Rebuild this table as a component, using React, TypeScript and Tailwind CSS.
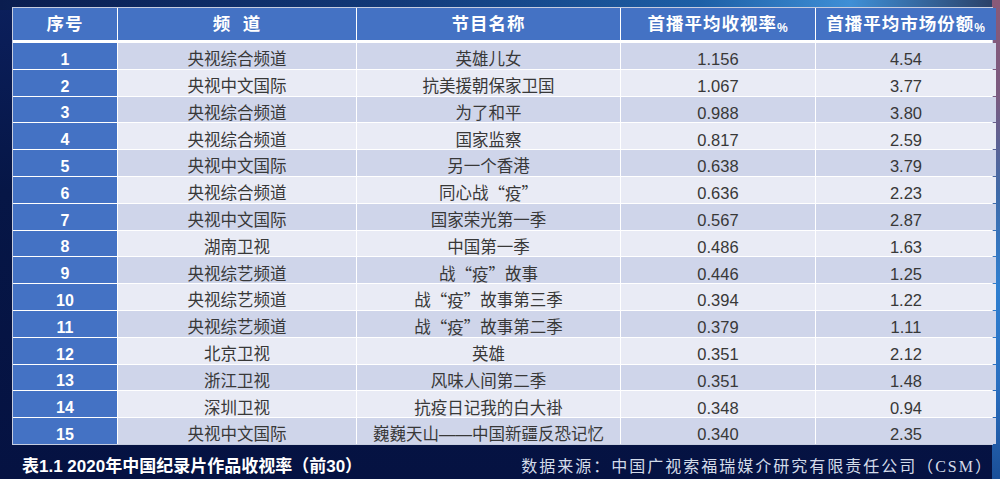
import React from "react";

const Q = ({ children }: { children: React.ReactNode }) => (
  <span style={{ fontFamily: '"Noto Sans CJK SC", sans-serif' }}>{children}</span>
);

const rows: [string, string, React.ReactNode, string, string][] = [
  ["1", "央视综合频道", "英雄儿女", "1.156", "4.54"],
  ["2", "央视中文国际", "抗美援朝保家卫国", "1.067", "3.77"],
  ["3", "央视综合频道", "为了和平", "0.988", "3.80"],
  ["4", "央视综合频道", "国家监察", "0.817", "2.59"],
  ["5", "央视中文国际", "另一个香港", "0.638", "3.79"],
  ["6", "央视综合频道", <>同心战<Q>“疫”</Q></>, "0.636", "2.23"],
  ["7", "央视中文国际", "国家荣光第一季", "0.567", "2.87"],
  ["8", "湖南卫视", "中国第一季", "0.486", "1.63"],
  ["9", "央视综艺频道", <>战<Q>“疫”</Q>故事</>, "0.446", "1.25"],
  ["10", "央视综艺频道", <>战<Q>“疫”</Q>故事第三季</>, "0.394", "1.22"],
  ["11", "央视综艺频道", <>战<Q>“疫”</Q>故事第二季</>, "0.379", "1.11"],
  ["12", "北京卫视", "英雄", "0.351", "2.12"],
  ["13", "浙江卫视", "风味人间第二季", "0.351", "1.48"],
  ["14", "深圳卫视", "抗疫日记我的白大褂", "0.348", "0.94"],
  ["15", "央视中文国际", "巍巍天山——中国新疆反恐记忆", "0.340", "2.35"],
];

const cols = "grid-cols-[104px_238px_263px_194px_180px]";

export default function App() {
  return (
    <div
      className="relative w-[1000px] h-[479px] overflow-hidden bg-[linear-gradient(180deg,#0b1f5c_0%,#061646_40%,#051242_100%)]"
      style={{ fontFamily: '"Liberation Sans", "Noto Sans CJK SC", sans-serif' }}
    >
      {/* background light shapes */}
      <div className="absolute inset-x-0 top-0 h-[10px] bg-[linear-gradient(90deg,#0a1d4f_0%,#123a7a_40%,#1d5fa6_70%,#3f8fd6_85%,#2a3d63_100%)]" />
      <div className="absolute right-0 top-0 w-[8px] h-full bg-[linear-gradient(180deg,#8a5a78_0%,#7a5a80_20%,#3f6aa8_40%,#2f7fd0_60%,#2a6fc0_80%,#1a4f98_100%)]" />

      <div className="relative pt-[7px] pl-[12px]">
        <div className="w-[981px] border border-[#c6cde0] bg-white">
          {/* header */}
          <div className={`grid ${cols} h-[35px] gap-x-px bg-white border-b-[3px] border-white`}>
            {[
              <>序号</>,
              <>频&nbsp;&nbsp;道</>,
              <>节目名称</>,
              <>
                首播平均收视率<span className="text-[12px]">%</span>
              </>,
              <>
                首播平均市场份额<span className="text-[12px]">%</span>
              </>,
            ].map((h, i) => (
              <div
                key={i}
                className="bg-[#4472c4] text-white text-[17.5px] font-semibold flex items-end justify-center pb-[3px] tracking-[1px]"
              >
                {h}
              </div>
            ))}
          </div>
          {/* body */}
          <div className="flex flex-col gap-y-px">
            {rows.map((r, idx) => (
              <div key={r[0]} className={`grid ${cols} h-[25.8px] gap-x-px`}>
                <div className="bg-[#4472c4] text-white text-[16px] font-semibold flex items-end justify-center pb-[1px] leading-none">
                  {r[0]}
                </div>
                {r.slice(1).map((c, j) => (
                  <div
                    key={j}
                    className={`${idx % 2 === 0 ? "bg-[#cfd5ea]" : "bg-[#e9ebf5]"} text-[#383838] text-[16.5px] flex items-end justify-center pb-[1px] leading-none`}
                  >
                    {c}
                  </div>
                ))}
              </div>
            ))}
          </div>
        </div>

        <div className="flex items-center justify-between h-[30px] mt-[7px] pr-[7px]">
          <div className="pl-[10px] text-white text-[17px] font-bold">
            表1.1 2020年中国纪录片作品收视率（前30）
          </div>
          <div
            className="text-[#d3dbe9] text-[16px] tracking-[2px]"
            style={{ fontFamily: '"Liberation Serif", "Noto Sans CJK SC", serif' }}
          >
            数据来源：中国广视索福瑞媒介研究有限责任公司（CSM）
          </div>
        </div>
      </div>
    </div>
  );
}
